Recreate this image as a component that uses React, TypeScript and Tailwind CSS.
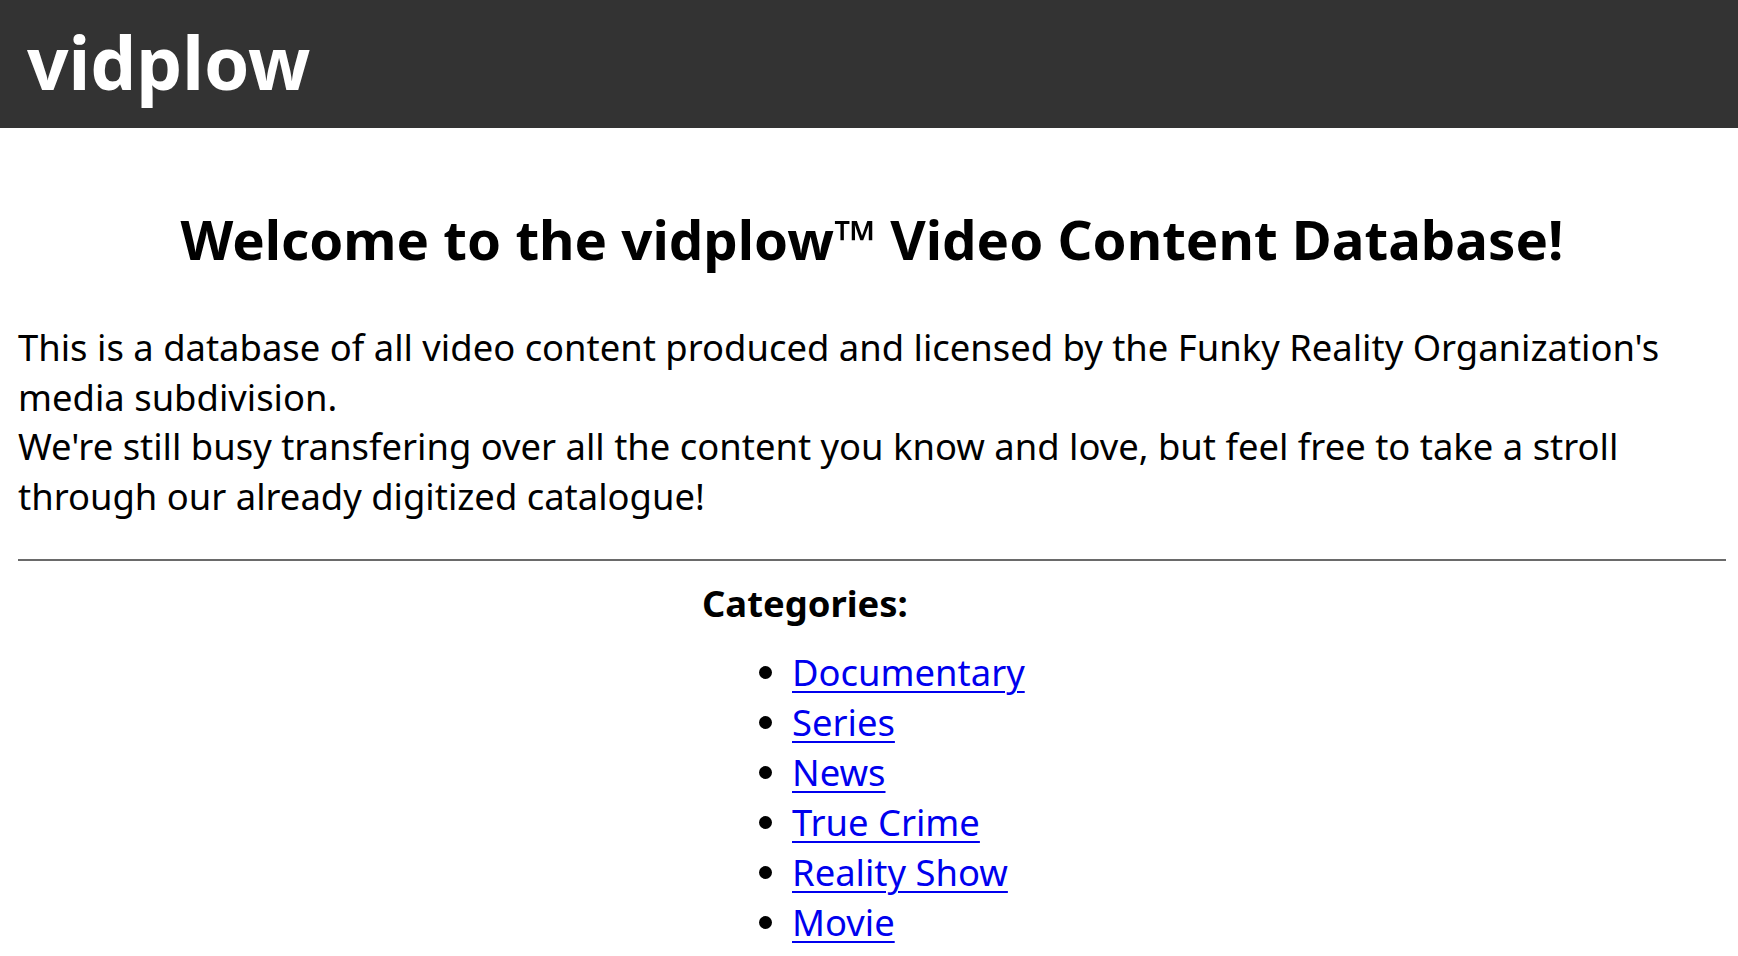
import React from "react";

const cats = ["Documentary", "Series", "News", "True Crime", "Reality Show", "Movie"];

export default function App() {
  return (
    <div className="min-h-screen bg-white text-black" style={{ fontFamily: '"Noto Sans", "Open Sans", sans-serif' }}>
      <header className="h-[128px] bg-[#333333] pl-[27px] pt-[12px]">
        <div className="text-[72.8px] font-bold leading-[99px] text-white">vidplow</div>
      </header>
      <main className="ml-[18px] mr-[12px] flex flex-col">
        <h2 className="mt-[74px] text-center text-[54.6px] font-bold leading-[74px]">
          Welcome to the vidplow™ Video Content Database!
        </h2>
        <p className="mt-[47px] text-[36.4px] leading-[49.6px]">
          This is a database of all video content produced and licensed by the Funky Reality Organization's media subdivision.
          <br />
          We're still busy transfering over all the content you know and love, but feel free to take a stroll through our already digitized catalogue!
        </p>
        <hr className="mt-[38px] border-0 border-t-2 border-[#6a6a6a]" />
        <div className="flex justify-center">
          <div className="w-[340px]">
            <div className="mt-[18px] text-[36.4px] font-bold leading-[49.6px]">Categories:</div>
            <ul className="mt-[18px] list-disc pl-[90px] text-[36.4px]">
              {cats.map((c) => (
                <li key={c} className="leading-[50px]">
                  <a href="#" className="text-[#0000ee] underline decoration-2 underline-offset-[5px]">
                    {c}
                  </a>
                </li>
              ))}
            </ul>
          </div>
        </div>
      </main>
    </div>
  );
}
